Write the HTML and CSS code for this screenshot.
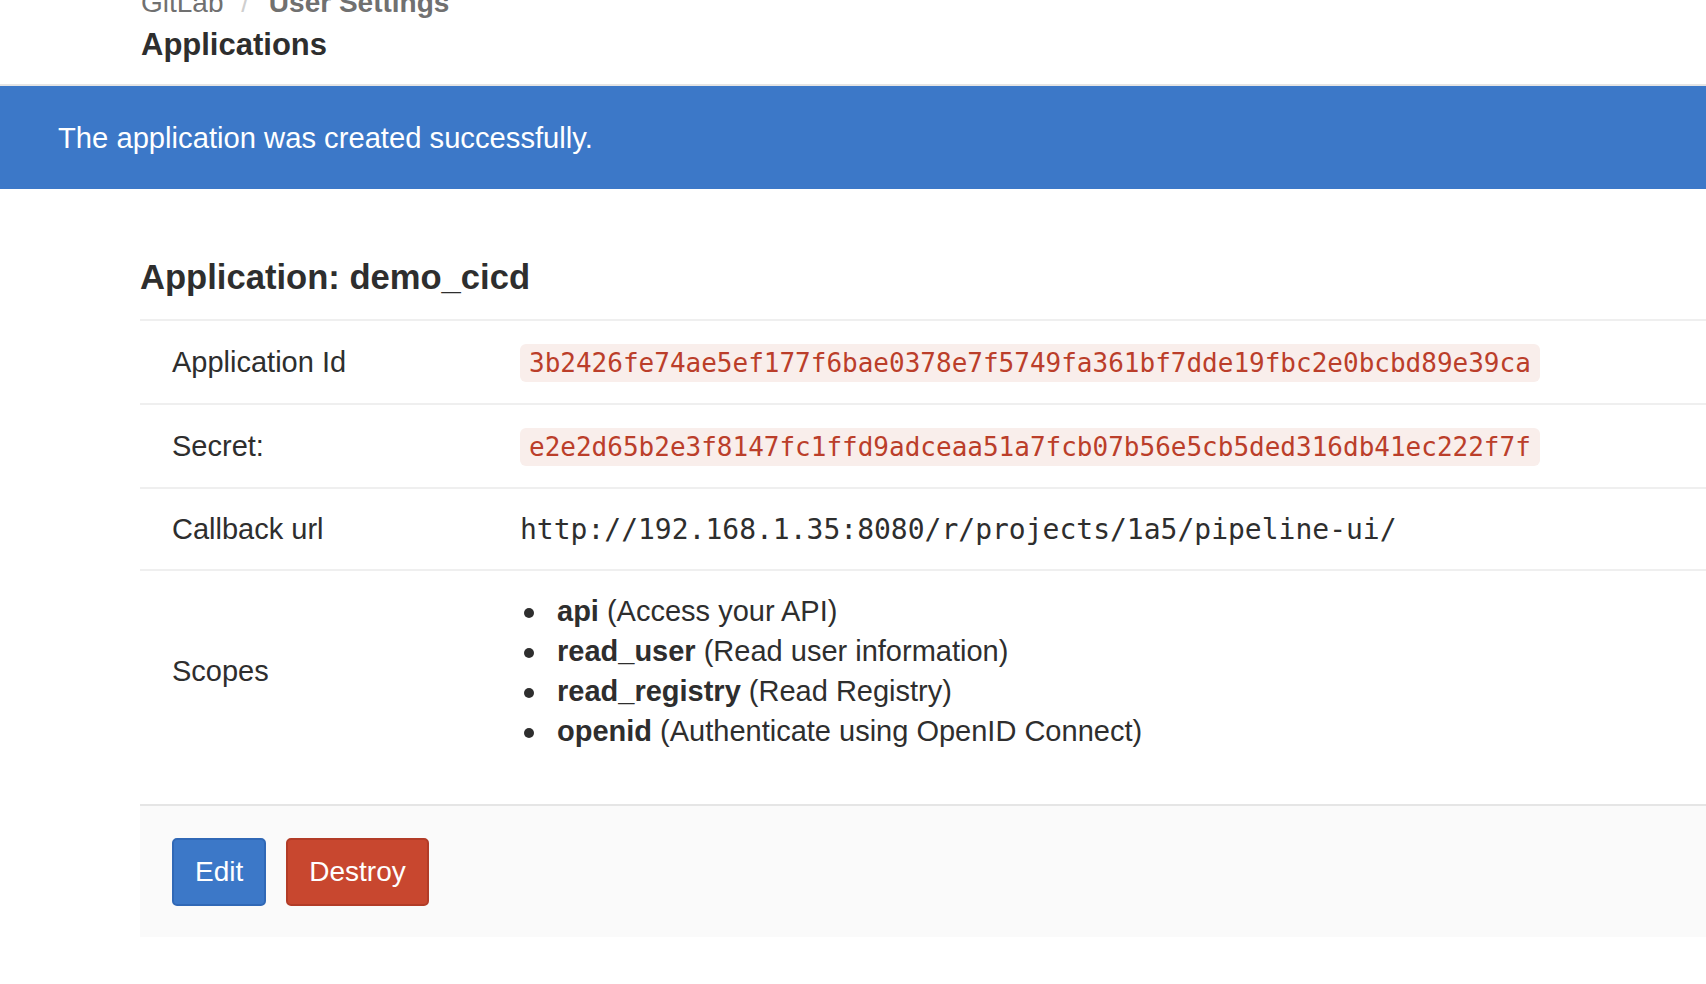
FILE: index.html
```html
<!DOCTYPE html>
<html lang="en">
<head>
<meta charset="utf-8">
<title>Applications · User Settings · GitLab</title>
<link rel="stylesheet" href="styles.css">
</head>
<body>
<header class="page-header">
  <nav class="breadcrumbs">
    <a class="crumb" href="#">GitLab</a>
    <span class="crumb-sep">/</span>
    <a class="crumb crumb-strong" href="#">User Settings</a>
  </nav>
  <h2 class="page-title">Applications</h2>
</header>

<div class="flash-notice">The application was created successfully.</div>

<main class="content">
  <h3 class="app-title">Application: demo_cicd</h3>

  <div class="details">
    <div class="row code-row">
      <div class="cell label">Application Id</div>
      <div class="cell value"><code class="token">3b2426fe74ae5ef177f6bae0378e7f5749fa361bf7dde19fbc2e0bcbd89e39ca</code></div>
    </div>
    <div class="row code-row">
      <div class="cell label">Secret:</div>
      <div class="cell value"><code class="token">e2e2d65b2e3f8147fc1ffd9adceaa51a7fcb07b56e5cb5ded316db41ec222f7f</code></div>
    </div>
    <div class="row">
      <div class="cell label">Callback url</div>
      <div class="cell value"><span class="url">http://192.168.1.35:8080/r/projects/1a5/pipeline-ui/</span></div>
    </div>
    <div class="row scopes-row">
      <div class="cell label scopes-label">Scopes</div>
      <div class="cell value scopes-value">
        <ul class="scopes">
          <li><strong>api</strong> (Access your API)</li>
          <li><strong>read_user</strong> (Read user information)</li>
          <li><strong>read_registry</strong> (Read Registry)</li>
          <li><strong>openid</strong> (Authenticate using OpenID Connect)</li>
        </ul>
      </div>
    </div>
  </div>

  <div class="form-actions">
    <a class="btn btn-primary" href="#">Edit</a>
    <a class="btn btn-danger" href="#">Destroy</a>
  </div>
</main>
</body>
</html>
```

FILE: styles.css
```css
* {
  box-sizing: border-box;
}

html, body {
  margin: 0;
  padding: 0;
  background: #ffffff;
}

body {
  font-family: "Liberation Sans", Arial, sans-serif;
  font-size: 29px;
  line-height: 42px;
  color: #2e2e2e;
}

/* Header with breadcrumbs */
.page-header {
  padding: 0 0 19px 141px;
  border-bottom: 2px solid #e5e5e5;
}

.breadcrumbs {
  margin-top: -15px;
  height: 36px;
  font-size: 28px;
  line-height: 36px;
  white-space: nowrap;
}

.crumb {
  color: #707070;
  text-decoration: none;
}

.crumb-strong {
  font-weight: bold;
}

.crumb-sep {
  color: #cfcfcf;
  margin: 0 12px 0 10px;
}

.page-title {
  margin: 4px 0 0;
  font-size: 31px;
  line-height: 40px;
  font-weight: bold;
  color: #2e2e2e;
}

/* Flash */
.flash-notice {
  background: #3c78c8;
  color: #ffffff;
  padding: 31px 0 30px 58px;
  font-size: 29.2px;
  line-height: 42px;
}

/* Content */
.content {
  padding-left: 140px;
}

.app-title {
  margin: 66px 0 20px;
  font-size: 34.6px;
  line-height: 44px;
  font-weight: bold;
  color: #2e2e2e;
}

.details {
  display: flex;
  flex-direction: column;
}

.row {
  display: grid;
  grid-template-columns: 348px 1fr;
  border-top: 2px solid #efefef;
  line-height: 40px;
}

.row.code-row {
  line-height: 42px;
}

.cell {
  padding: 20px 32px;
}

.token {
  font-family: "DejaVu Sans Mono", "Liberation Mono", monospace;
  font-size: 26px;
  line-height: 1;
  color: #bb3e2a;
  background: #f9eeeb;
  padding: 4px 9px;
  border-radius: 6px;
}

.url {
  font-family: "DejaVu Sans Mono", "Liberation Mono", monospace;
  font-size: 28px;
  line-height: 1;
  color: #2e2e2e;
}

.scopes-row {
  align-items: center;
}

.scopes-label {
  padding-bottom: 53px;
}

.scopes-value {
  padding-top: 20px;
}

.scopes {
  margin: 0 0 33px;
  padding-left: 37px;
  line-height: 40px;
  list-style: none;
}

.scopes li::before {
  content: "";
  display: inline-block;
  width: 10px;
  height: 10px;
  border-radius: 50%;
  background: #2e2e2e;
  margin-left: -33px;
  margin-right: 23px;
  vertical-align: middle;
}

.scopes strong {
  font-weight: bold;
}

/* Footer actions */
.form-actions {
  display: flex;
  gap: 20px;
  background: #fafafa;
  border-top: 2px solid #e5e5e5;
  padding: 32px 32px 31px;
}

.btn {
  display: inline-block;
  font-size: 28px;
  line-height: 40px;
  padding: 12px 21px;
  border: 2px solid transparent;
  border-radius: 5px;
  color: #ffffff;
  text-decoration: none;
}

.btn-primary {
  background: #3c78c8;
  border-color: #3068b6;
}

.btn-danger {
  background: #c8472f;
  border-color: #b23c27;
}
```
